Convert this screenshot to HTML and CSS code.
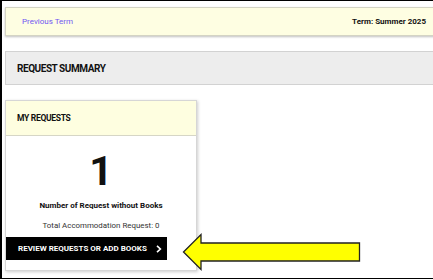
FILE: index.html
```html
<!DOCTYPE html>
<html>
<head>
<meta charset="utf-8">
<link rel="stylesheet" href="styles.css">
</head>
<body>
<div class="frame">
  <div class="termbar">
    <a class="prev" href="#">Previous Term</a>
    <span class="term">Term: Summer 2025</span>
  </div>
  <div class="summary">REQUEST SUMMARY</div>
  <div class="card">
    <div class="card-head">MY REQUESTS</div>
    <div class="card-body">
      <div class="big">1</div>
      <div class="label">Number of Request without Books</div>
      <div class="total">Total Accommodation Request: 0</div>
    </div>
    <a class="btn" href="#">REVIEW REQUESTS OR ADD BOOKS
      <svg class="chev" width="6" height="8" viewBox="0 0 6 8"><path d="M1 0.8 L4.4 4 L1 7.2" fill="none" stroke="#fff" stroke-width="1.6"/></svg>
    </a>
  </div>
  <svg class="arrow" width="180" height="40" viewBox="182 232 180 40">
    <polygon points="183.5,252 201,234.5 201,243 359.5,243 359.5,261 201,261 201,269.5" fill="#ffff00" stroke="#222" stroke-width="1.3" stroke-linejoin="miter"/>
  </svg>
</div>
</body>
</html>
```
FILE: styles.css
```css
html, body { margin: 0; padding: 0; background: #fff; }
body { font-family: Roboto, "Liberation Sans", sans-serif; width: 433px; height: 280px; overflow: hidden; }
.frame {
  position: relative;
  box-sizing: border-box;
  height: 279px;
  border-top: 1px solid #000;
  border-left: 2px solid #000;
  border-bottom: 1px solid #000;
  padding: 6px 0 0 3px;
}
.termbar {
  display: flex;
  justify-content: space-between;
  align-items: center;
  height: 27px;
  background: #fefee2;
  border: 1px solid #d4d4c4;
  border-right: none;
  box-shadow: 0 1px 2px rgba(0,0,0,0.25);
  padding: 0 9px 0 16px;
  margin-right: -2px;
  font-size: 8px;
}
.prev { color: #7157f2; text-decoration: none; }
.term { font-weight: bold; color: #111; }
.summary {
  margin-top: 15px;
  height: 34px;
  box-sizing: border-box;
  background: #ededed;
  border: 1px solid #d2d2d2;
  border-right: none;
  margin-right: -2px;
  display: flex;
  align-items: center;
  padding-left: 11px;
  font-size: 10px;
  letter-spacing: -0.45px;
  font-weight: bold;
  color: #111;
}
.card {
  margin-top: 15px;
  width: 192px;
  height: 171px;
  box-sizing: border-box;
  border: 1px solid #d6d6d6;
  box-shadow: 1px 1px 3px rgba(0,0,0,0.2);
  display: flex;
  flex-direction: column;
}
.card-head {
  height: 35px;
  box-sizing: border-box;
  background: #fefee0;
  border-bottom: 1px solid #d6d6c6;
  display: flex;
  align-items: center;
  padding-left: 11px;
  font-size: 8.5px;
  letter-spacing: -0.3px;
  font-weight: bold;
  color: #111;
}
.card-body {
  display: flex;
  flex-direction: column;
  align-items: center;
  padding-top: 12px;
}
.big { font-size: 41px; font-weight: bold; line-height: 46px; color: #111; }
.label { margin-top: 7px; font-size: 8px; font-weight: bold; color: #111; }
.total { margin-top: 11px; font-size: 7.9px; color: #333; }
.btn {
  margin-top: 7px;
  width: 161px;
  height: 23px;
  box-sizing: border-box;
  background: #000;
  color: #fff;
  text-decoration: none;
  font-size: 8px;
  font-weight: bold;
  display: flex;
  align-items: center;
  padding-left: 12px;
  gap: 8px;
}
.chev { margin-left: 1px; }
.arrow { position: absolute; left: 180px; top: 231px; }
```
